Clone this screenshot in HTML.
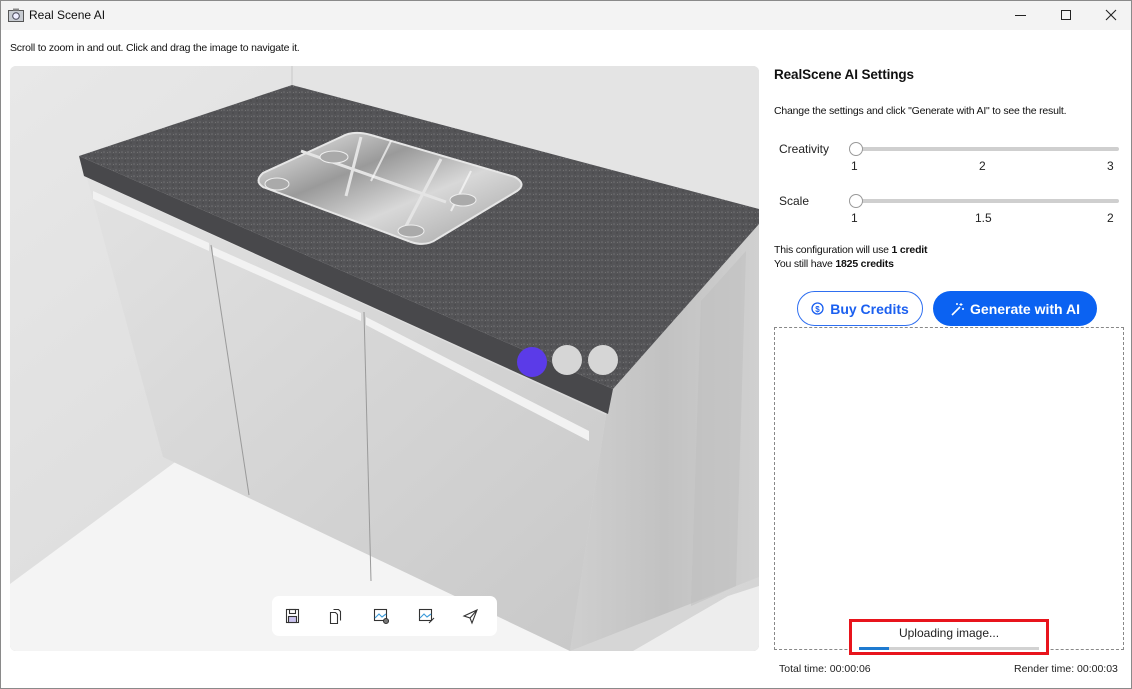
<!DOCTYPE html>
<html><head><meta charset="utf-8">
<style>
*{margin:0;padding:0;box-sizing:border-box}
html,body{width:1132px;height:689px;overflow:hidden;background:#fff;font-family:"Liberation Sans",sans-serif;color:#111}
.win{position:absolute;left:0;top:0;width:1132px;height:689px;border:1px solid #8a8a8a;background:#fff}
.title{position:absolute;left:0;top:0;width:1130px;height:29px;background:#f3f3f3}
.title .t{position:absolute;left:28px;top:7px;font-size:12px;color:#111}
.abs{position:absolute}
.hint{left:9px;top:41px;font-size:10.5px;color:#111;letter-spacing:-0.2px}
.view{left:9px;top:65px;width:749px;height:585px;border-radius:6px;overflow:hidden;background:#dcdcdc}
h1{position:absolute;left:773px;top:66px;font-size:13.5px;font-weight:bold;letter-spacing:-0.1px}
.s{font-size:10.5px;letter-spacing:-0.2px}
.lab{font-size:12px;color:#222}
.track{position:absolute;height:4px;background:#cfcfcf;border-radius:2px}
.knob{position:absolute;width:14px;height:14px;border:1.5px solid #999;border-radius:50%;background:#fff}
.btn{position:absolute;height:35px;border-radius:18px;font-weight:bold;font-size:14px;display:flex;align-items:center;justify-content:center;gap:6px}
.dash{left:773px;top:326px;width:350px;height:323px;border:1px dashed #888}
.tb{left:271px;top:595px;width:225px;height:40px;background:#fff;border-radius:7px}
</style></head><body>
<div class="win">
<div class="title">
 <svg class="abs" style="left:7px;top:7px" width="16" height="14" viewBox="0 0 16 14"><rect x="0.5" y="2.5" width="15" height="11" fill="#c8ccd2" stroke="#555"/><rect x="5" y="0.5" width="6" height="2" fill="#888"/><circle cx="8" cy="8" r="3.3" fill="#eef" stroke="#445"/></svg>
 <span class="t">Real Scene AI</span>
 <svg class="abs" style="left:1014px;top:8px" width="110" height="14"><line x1="0" y1="6.5" x2="11" y2="6.5" stroke="#222"/><rect x="46.5" y="1.5" width="9" height="9" fill="none" stroke="#222"/><path d="M91 1 L101 11 M101 1 L91 11" stroke="#222" stroke-width="1.1"/></svg>
</div>
<div class="abs hint">Scroll to zoom in and out. Click and drag the image to navigate it.</div>
<div class="abs view">
<svg width="749" height="585" viewBox="9 65 749 585">
<defs>
<linearGradient id="wl" x1="0" y1="0" x2="1" y2="1"><stop offset="0" stop-color="#e8e8e8"/><stop offset="1" stop-color="#d4d4d4"/></linearGradient>
<linearGradient id="cf" x1="0" y1="0" x2="1" y2="1"><stop offset="0" stop-color="#e2e2e2"/><stop offset="1" stop-color="#c8c8c8"/></linearGradient>
<linearGradient id="sd" x1="0" y1="0" x2="1" y2="0"><stop offset="0" stop-color="#cfcfcf"/><stop offset=".5" stop-color="#c2c2c2"/><stop offset="1" stop-color="#d0d0d0"/></linearGradient>
<linearGradient id="sk" x1="0" y1="0" x2="1" y2="1"><stop offset="0" stop-color="#f0f0f0"/><stop offset=".35" stop-color="#9a9a9a"/><stop offset=".6" stop-color="#d8d8d8"/><stop offset="1" stop-color="#a0a0a0"/></linearGradient>
<pattern id="gr" width="6" height="6" patternUnits="userSpaceOnUse"><rect width="6" height="6" fill="#545457"/><circle cx="1" cy="1" r=".8" fill="#707073"/><circle cx="4" cy="4" r=".7" fill="#434345"/><circle cx="4.5" cy="1.5" r=".5" fill="#7a7a7a"/></pattern>
</defs>
<rect x="9" y="65" width="749" height="585" fill="url(#wl)"/>
<polygon points="291,65 758,65 758,210 291,84" fill="#e4e4e4"/>
<line x1="291" y1="65" x2="291" y2="84" stroke="#c8c8c8"/>
<polygon points="9,583 181,456 569,650 9,650" fill="#f4f4f4"/>
<polygon points="632,650 727,595 758,585 758,650" fill="#ededed"/>
<!-- cabinet right side -->
<polygon points="612,388 758,223 758,576 569,650 605,414" fill="url(#sd)"/>
<polygon points="700,300 745,250 735,585 690,605" fill="#bdbdbd" opacity=".5"/>
<!-- cabinet front -->
<polygon points="86,177 605,414 569,650 162,456" fill="url(#cf)"/>
<line x1="210" y1="244" x2="248" y2="494" stroke="#9a9a9a"/>
<line x1="363" y1="311" x2="370" y2="580" stroke="#9a9a9a"/>
<polygon points="92,190 208,242 208,250 92,198" fill="#f2f2f2"/>
<polygon points="212,246 360,312 360,320 212,254" fill="#f2f2f2"/>
<polygon points="365,316 588,430 588,440 365,324" fill="#f2f2f2"/>
<!-- countertop -->
<polygon points="78,155 291,84 758,208 758,223 612,388" fill="url(#gr)"/>
<polygon points="78,155 612,388 607,413 83,175" fill="#48484b"/>
<!-- sink -->
<path d="M262,172 Q253,180 262,186 L410,241 Q425,246 436,238 L516,190 Q526,183 514,176 L370,134 Q352,129 340,136 Z" fill="url(#sk)" stroke="#e6e6e6" stroke-width="2"/>
<path d="M300,150 L445,201 M360,136 L345,195 M440,158 L405,225" stroke="#e4e4e4" stroke-width="3"/>
<path d="M390,140 L370,180 M470,170 L450,210" stroke="#fafafa" stroke-width="2" opacity=".7"/>
<ellipse cx="276" cy="183" rx="12" ry="6" fill="#aaa" stroke="#eee"/>
<ellipse cx="333" cy="156" rx="14" ry="6" fill="#aaa" stroke="#eee"/>
<ellipse cx="462" cy="199" rx="13" ry="6" fill="#aaa" stroke="#eee"/>
<ellipse cx="410" cy="230" rx="13" ry="6" fill="#aaa" stroke="#eee"/>
<!-- dots -->
<circle cx="531" cy="361" r="15" fill="#5b3be8"/>
<circle cx="566" cy="359" r="15" fill="#d6d6d6"/>
<circle cx="602" cy="359" r="15" fill="#d6d6d6"/>
</svg>
</div>
<div class="abs tb">
<svg width="225" height="40">
 <g fill="none" stroke="#333" stroke-width="1.1">
  <rect x="14.5" y="13.5" width="12" height="13"/><rect x="17.5" y="13.5" width="6" height="4"/><rect x="16.5" y="20.5" width="8" height="6" fill="#c9c2ee"/>
  <path d="M58.5 16.5h5l2 2v9h-7z M61.5 13.5h5l2 2v9"/>
  <rect x="102.5" y="13.5" width="12" height="11"/><path d="M103 22 l4 -4 3 3 4 -3" stroke="#3a9ad9"/><circle cx="114" cy="25" r="2.5" fill="#777"/>
  <rect x="147.5" y="13.5" width="12" height="11"/><path d="M148 22 l4 -4 3 3 4 -3" stroke="#3a9ad9"/><path d="M157 27 l5 -5"/>
  <path d="M192 20 l13 -6 -5 13 -2 -5z M198 22 l7 -8"/>
 </g>
</svg>
</div>
<h1>RealScene AI Settings</h1>
<div class="abs s" style="left:773px;top:104px">Change the settings and click "Generate with AI" to see the result.</div>
<div class="abs lab" style="left:778px;top:141px">Creativity</div>
<div class="track" style="left:855px;top:146px;width:263px"></div>
<div class="knob" style="left:848px;top:141px"></div>
<div class="abs lab" style="left:850px;top:158px">1</div>
<div class="abs lab" style="left:978px;top:158px">2</div>
<div class="abs lab" style="left:1106px;top:158px">3</div>
<div class="abs lab" style="left:778px;top:193px">Scale</div>
<div class="track" style="left:855px;top:198px;width:263px"></div>
<div class="knob" style="left:848px;top:193px"></div>
<div class="abs lab" style="left:850px;top:210px">1</div>
<div class="abs lab" style="left:974px;top:210px">1.5</div>
<div class="abs lab" style="left:1106px;top:210px">2</div>
<div class="abs s" style="left:773px;top:243px">This configuration will use <b>1 credit</b></div>
<div class="abs s" style="left:773px;top:257px">You still have <b>1825 credits</b></div>
<div class="btn" style="left:796px;top:290px;width:126px;border:1px solid #2f6ff0;color:#1a5ff0;background:#fff">
 <svg width="13" height="13"><circle cx="6.5" cy="6.5" r="5.5" fill="none" stroke="#1a5ff0" stroke-width="1.3"/><text x="6.5" y="10" font-size="8" text-anchor="middle" fill="#1a5ff0" font-family="Liberation Sans">$</text></svg>Buy Credits</div>
<div class="btn" style="left:932px;top:290px;width:164px;background:#0b62f2;color:#fff">
 <svg width="14" height="14"><path d="M2 13 L10 5" stroke="#fff" stroke-width="1.6"/><path d="M11 1v3M9.5 2.5h3M13 6v2M12 7h2M7 1v2M6 2h2" stroke="#fff"/></svg>Generate with AI</div>
<div class="abs dash"></div>
<div class="abs" style="left:848px;top:618px;width:200px;height:36px;border:3px solid #e8141c;background:#fff"></div>
<div class="abs" style="left:848px;top:625px;width:200px;text-align:center;font-size:12px;color:#222">Uploading image...</div>
<div class="abs" style="left:858px;top:646px;width:180px;height:3px;background:#d2d2d2"><div style="width:30px;height:3px;background:#1e7ad0"></div></div>
<div class="abs" style="left:778px;top:662px;font-size:10.5px;color:#222">Total time: 00:00:06</div>
<div class="abs" style="left:1013px;top:662px;font-size:10.5px;color:#222">Render time: 00:00:03</div>
</div>
</body></html>
